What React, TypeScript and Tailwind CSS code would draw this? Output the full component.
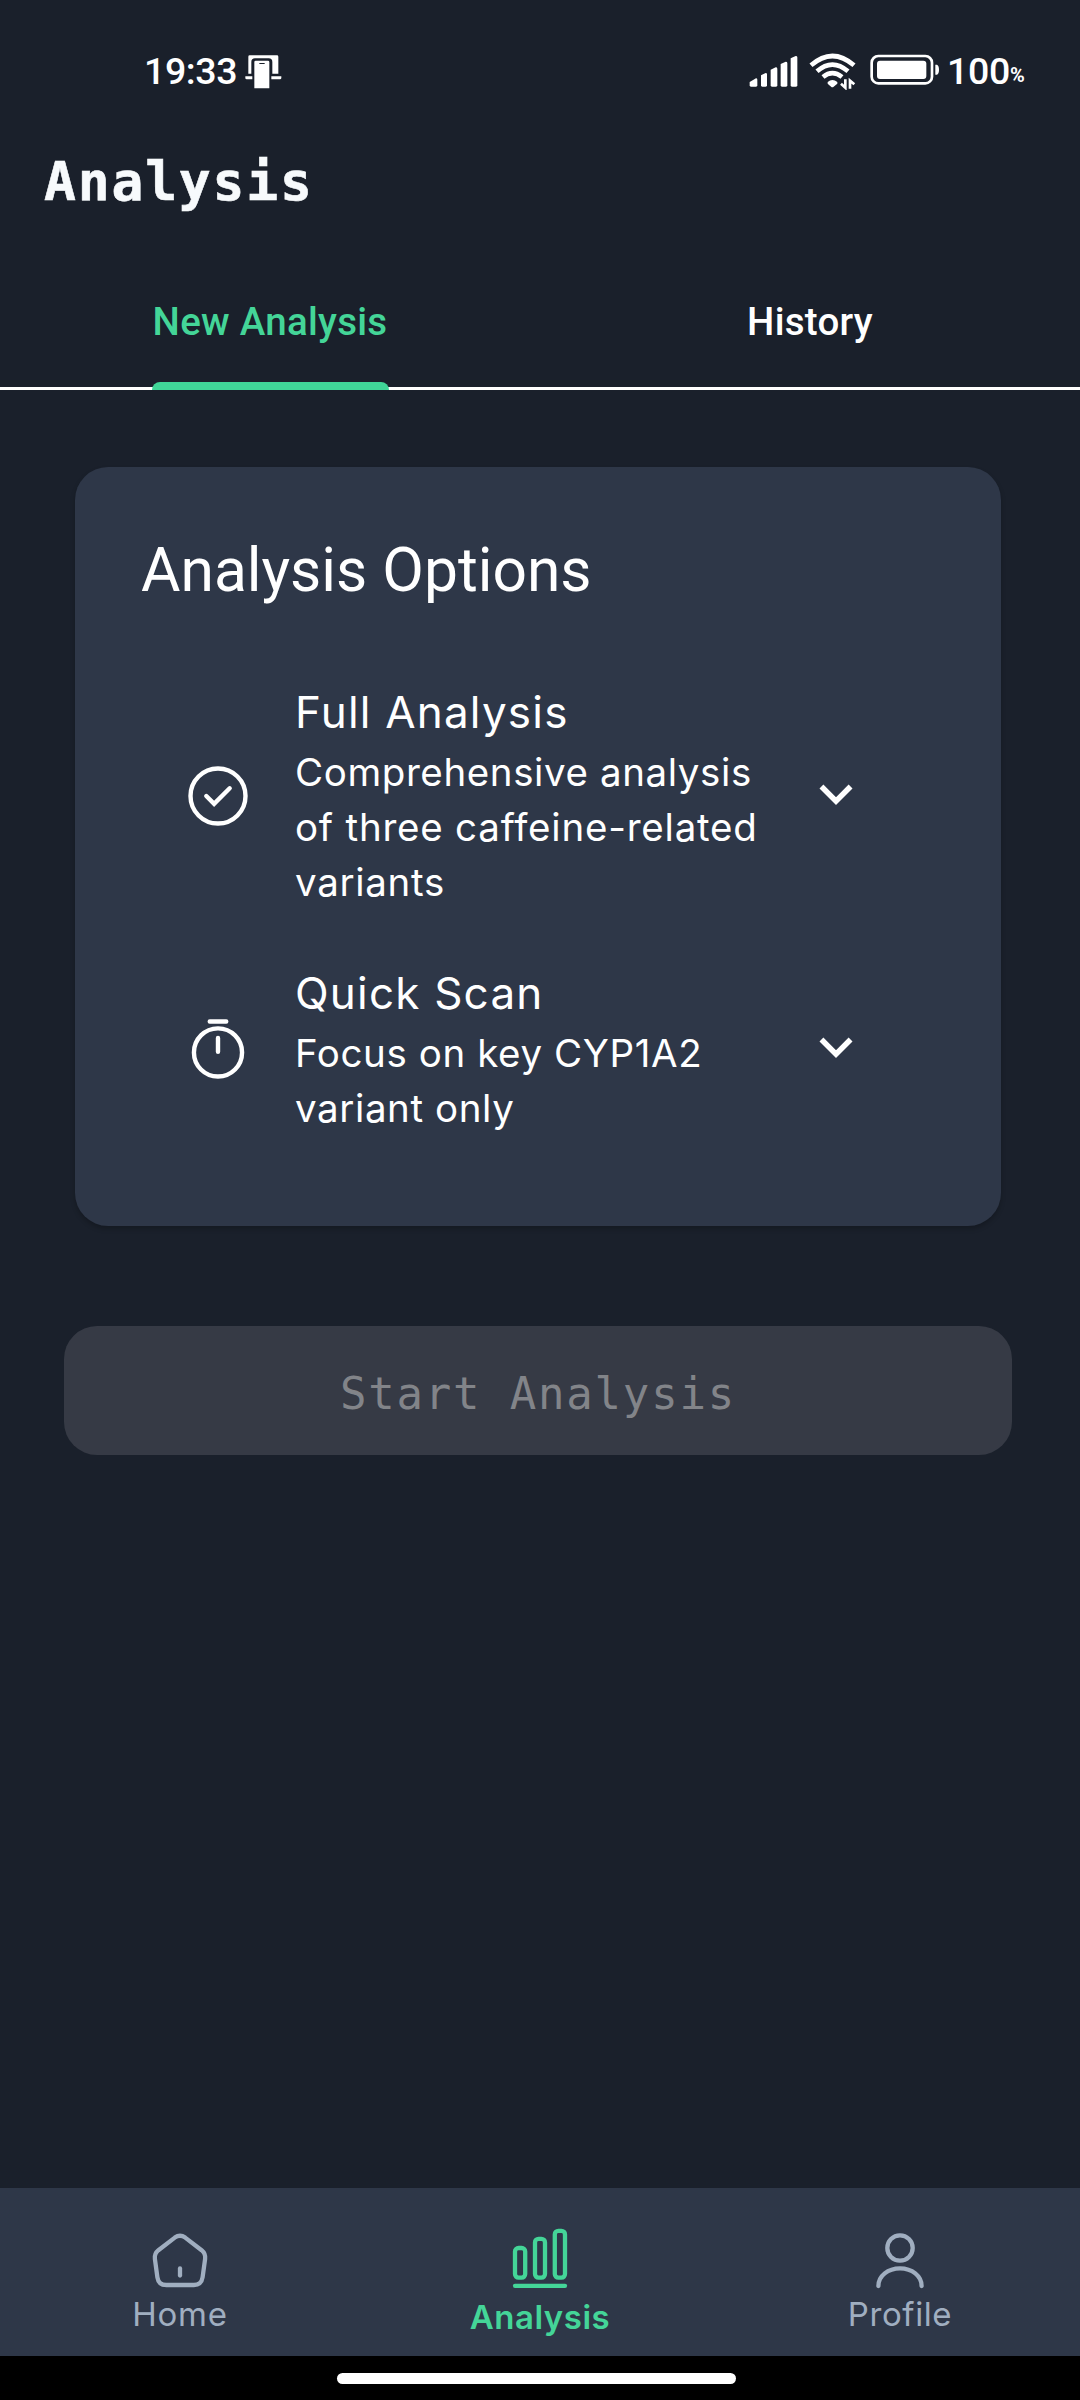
import React from "react";

function StatusBar() {
  return (
    <div className="flex h-[140px] items-start justify-between pl-[144px] pr-[53px] pt-[48px] font-['Roboto',sans-serif] text-[37.5px] font-medium leading-[47px] text-white">
      <div className="flex">
        <span className="w-[101px] tracking-[-0.4px]">19:33</span>
        <svg className="mt-[7px] h-[34px] w-[37px]" viewBox="374 74 111 102" fill="white">
          <path d="M388 75H470Q474 75 474 79V130H456V95Q456 84 445 84H404Q393 84 393 95V130H384V79Q384 75 388 75Z" />
          <path d="M375 138H396V147H379Q375 147 375 143ZM453 138H483V143Q483 147 479 147H453Z" />
          <path fillRule="evenodd" d="M406 91H443Q447 91 447 95V174H402V95Q402 91 406 91ZM417 98V101H433V98Z" />
        </svg>
      </div>
      <div className="flex">
        <svg className="mt-[6px] h-[36px] w-[50px]" viewBox="59 70 150 108" fill="white">
          <path d="M61 154 80 143Q84 143 84 147V164Q84 168 80 168H65Q61 168 61 164Z" />
          <path d="M95 134 109 127Q113 127 113 131V164Q113 168 109 168H99Q95 168 95 164Z" />
          <path d="M124 117 139 110Q144 110 144 114V164Q144 168 140 168H128Q124 168 124 164Z" />
          <path d="M154 100 169 93Q174 93 174 97V164Q174 168 170 168H158Q154 168 154 164Z" />
          <path d="M184 83 199 76Q204 76 204 80V164Q204 168 200 168H188Q184 168 184 164Z" />
        </svg>
        <svg className="ml-[10px] mt-[5px] h-[37px] w-[48px]" viewBox="241 68 144 111" fill="none" stroke="white">
          <path strokeWidth="14" d="M247 105Q311 49 376 105M265 123Q311 83 358 123M283 140Q311 117 340 140" />
          <path fill="white" stroke="none" d="M297 155Q311 143 326 155V160L313 171H309L297 160Z" />
          <path strokeWidth="8" d="M350 147V172L337 160M364 175V151L377 162" />
        </svg>
        <svg className="ml-[13px] mt-[6px] h-[32px] w-[70px]" viewBox="425 73 210 96" fill="none">
          <rect x="430" y="79" width="181" height="82" rx="20" stroke="white" strokeWidth="8" />
          <rect x="446" y="93" width="148" height="55" rx="9" fill="white" />
          <path d="M621 105H626Q632 108 632 120T626 135H621Z" fill="white" />
        </svg>
        <span className="ml-[7px] tracking-[-0.3px]">100</span>
        <span className="mt-[4px] w-[17px] text-[20px] font-bold">%</span>
      </div>
    </div>
  );
}

function Tabs() {
  return (
    <div className="flex h-[154px] border-b-[3px] border-white font-['Roboto',sans-serif] text-[38.5px] font-medium leading-[55px] tracking-[0.275px]">
      <div className="flex flex-1 flex-col items-center text-[#44d598]">
        <span className="mt-[58px]">New Analysis</span>
        <div className="relative z-10 mt-[33px] h-[8px] w-[237px] shrink-0 rounded-t-[8px] bg-[#40d698]" />
      </div>
      <div className="flex flex-1 justify-center text-white">
        <span className="mt-[58px]">History</span>
      </div>
    </div>
  );
}

function TickCircleIcon() {
  return (
    <svg className="mt-[3px] size-[66px] shrink-0" viewBox="0 0 24 24" fill="none" stroke="white" strokeWidth="1.6" strokeLinecap="round">
      <circle cx="12" cy="12" r="10" />
      <path d="M7.75 12l2.83 2.83 5.67-5.66" />
    </svg>
  );
}

function TimerIcon() {
  return (
    <svg className="mt-[2px] size-[66px] shrink-0" viewBox="0 0 24 24" fill="none" stroke="white" strokeWidth="1.6" strokeLinecap="round">
      <circle cx="12" cy="13.25" r="8.75" />
      <path d="M12 8v5M9 2h6" />
    </svg>
  );
}

function ChevronIcon() {
  return (
    <svg className="mb-[2px] size-[66px] shrink-0" viewBox="0 0 24 24" fill="white">
      <path d="M7.41 8.59 12 13.17l4.59-4.58L18 10l-6 6-6-6z" />
    </svg>
  );
}

function Option({ icon, title, children }: { icon: React.ReactNode; title: string; children: React.ReactNode }) {
  return (
    <div className="flex items-center pl-[110px]">
      {icon}
      <div className="ml-[44px] w-[508px] whitespace-nowrap font-['Inter',sans-serif] text-white">
        <div className="text-[44px] leading-[66px] tracking-[1.2px]">{title}</div>
        <div className="text-[38.5px] leading-[55px] tracking-[0.6px]">{children}</div>
      </div>
      <ChevronIcon />
    </div>
  );
}

function BottomNav() {
  return (
    <div className="flex h-[168px] bg-[#2e3748] font-['Inter',sans-serif] text-[33px] leading-[44px] tracking-[0.6px] text-[#a0aec0]">
      <div className="flex flex-1 flex-col items-center pt-[39px]">
        <svg className="size-[66px]" viewBox="0 0 66 66" fill="none" stroke="currentColor" strokeWidth="4.3" strokeLinecap="round">
          <path d="M27.8 10.6Q33 6.8 38.2 10.6L54.6 23.2Q58.8 26.6 58.1 32L55.6 50.3Q54.4 58 46.8 58H19.2Q11.6 58 10.4 50.3L7.9 32Q7.2 26.6 11.4 23.2Z" />
          <path d="M33 41.5V48.5" />
        </svg>
        <span className="-mt-[1px] tracking-[0.8px]">Home</span>
      </div>
      <div className="flex flex-1 flex-col items-center pt-[35px] font-semibold text-[#44d598]">
        <svg className="h-[68px] w-[66px]" viewBox="0 0 66 68" fill="none" stroke="currentColor" strokeWidth="4.3" strokeLinecap="round">
          <rect x="8" y="25" width="10.2" height="29.7" rx="3.6" />
          <rect x="28" y="15.8" width="10" height="38.9" rx="3.6" />
          <rect x="47.8" y="7.8" width="10.2" height="46.9" rx="3.6" />
          <path d="M8 62.8H58" />
        </svg>
        <span className="mt-[4px] tracking-[0.5px]">Analysis</span>
      </div>
      <div className="flex flex-1 flex-col items-center pt-[39px]">
        <svg className="size-[66px]" viewBox="0 0 66 66" fill="none" stroke="currentColor" strokeWidth="4.3" strokeLinecap="round">
          <circle cx="33" cy="21" r="12.7" />
          <path d="M11.4 59C11.4 49 21 41.4 33 41.4S54.6 49 54.6 59" />
        </svg>
        <span className="-mt-[1px]">Profile</span>
      </div>
    </div>
  );
}

export default function App() {
  return (
    <div className="flex h-[2400px] w-[1080px] flex-col overflow-hidden bg-[#1a202b]">
      <StatusBar />
      <h1 className="h-[96px] pl-[44px] pt-[7px] font-['DejaVu_Sans_Mono',monospace] text-[53px] font-bold leading-[70px] tracking-[1.8px] text-[#f7fafc] [-webkit-text-stroke:0.6px_#f7fafc]">
        Analysis
      </h1>
      <Tabs />
      <section className="ml-[75px] mt-[77px] h-[759px] w-[926px] rounded-[33px] bg-[#2e3748] pt-[65px] shadow-[0_3px_5px_rgba(0,0,0,0.22)]">
        <h2 className="pl-[66px] font-['Roboto',sans-serif] text-[60.5px] leading-[77px] text-white">Analysis Options</h2>
        <div className="mt-[70px] flex flex-col gap-[50px]">
          <Option icon={<TickCircleIcon />} title="Full Analysis">
            <div>Comprehensive analysis</div>
            <div className="tracking-[0.78px]">of three caffeine-related</div>
            <div className="tracking-[0.69px]">variants</div>
          </Option>
          <Option icon={<TimerIcon />} title="Quick Scan">
            <div>Focus on key CYP1A2</div>
            <div>variant only</div>
          </Option>
        </div>
      </section>
      <button
        disabled
        className="ml-[64px] mt-[100px] h-[129px] w-[948px] rounded-[33px] bg-[#363a45] pt-[7px] font-['DejaVu_Sans_Mono',monospace] text-[44px] tracking-[1.8px] text-[#828489]"
      >
        Start Analysis
      </button>
      <div className="mt-auto">
        <BottomNav />
        <div className="flex h-[44px] justify-center bg-black pr-[7px] pt-[17px]">
          <div className="h-[11px] w-[399px] rounded-full bg-white" />
        </div>
      </div>
    </div>
  );
}
